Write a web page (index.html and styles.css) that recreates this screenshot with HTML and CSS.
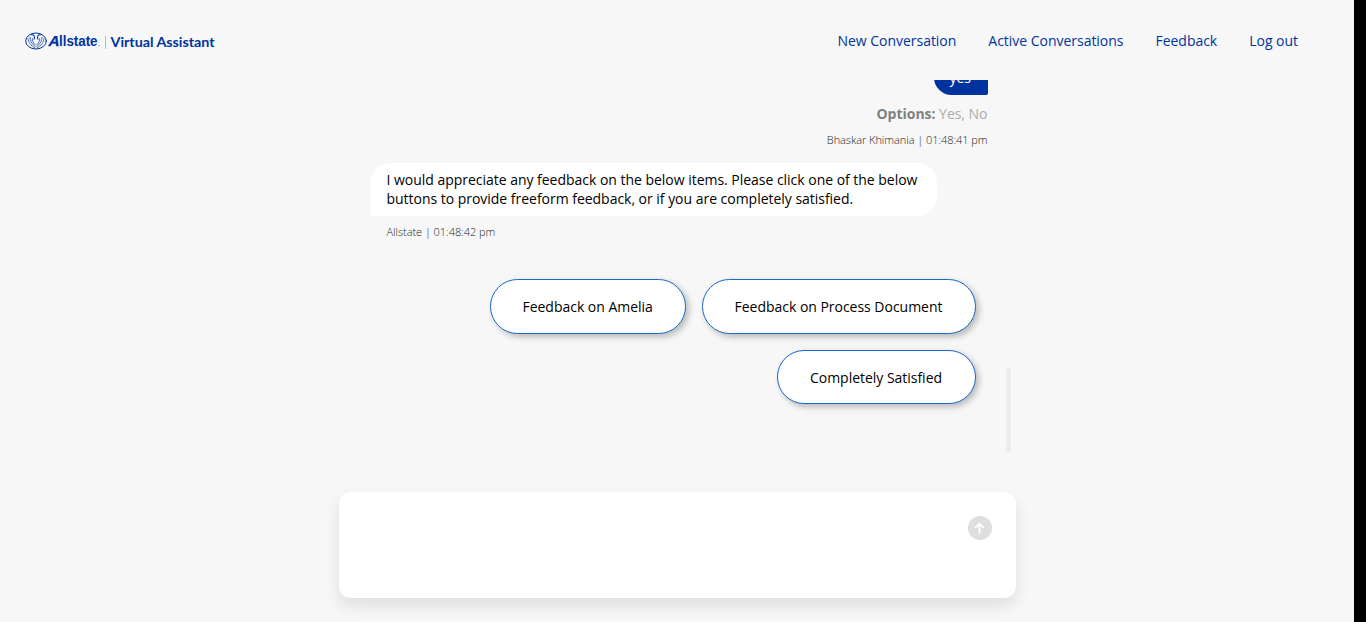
FILE: index.html
```html
<!DOCTYPE html>
<html lang="en">
<head>
<meta charset="utf-8">
<title>Allstate Virtual Assistant</title>
<link rel="stylesheet" href="styles.css">
</head>
<body>
<div class="app">
  <header class="header">
    <svg class="logo" width="194" height="22" viewBox="0 0 194 22" role="img" aria-label="Allstate Virtual Assistant">
      <g fill="none" stroke="#0033a0" stroke-linecap="round">
        <ellipse cx="11" cy="11" rx="10.300" ry="8" stroke-width="1"/>
        <path stroke-width=".7" d="M3 8.500C3.500 12.500 5.500 15.500 9.800 17.800M5 7C5 11 6.800 14 10.200 16.400M7.300 8.500C7.200 11 8.200 12.800 10.300 14.800M19 8.500C18.500 12.500 16.500 15.500 12.200 17.800M17 7C17 11 15.200 14 11.800 16.400M14.700 8.500C14.800 11 13.800 12.800 11.700 14.800"/>
        <path stroke-width="1.100" d="M6.500 4.800C9 4.400 10 6.500 9.200 9.200M15.500 4.800C13 4.400 12 6.500 12.800 9.200"/>
      </g>
      <text class="brand brand-initial" transform="translate(22.800 16.300) skewX(-14)" textLength="11" lengthAdjust="spacingAndGlyphs">A</text>
      <text class="brand" x="34" y="16.300" textLength="38.500" lengthAdjust="spacingAndGlyphs">llstate</text>
      <circle cx="74.300" cy="15.600" r=".7" fill="#7e98cc"/>
      <path d="M80.500 6v13" stroke="#a9bbdf"/>
      <text class="product" x="85.500" y="17" textLength="104" lengthAdjust="spacingAndGlyphs">Virtual Assistant</text>
    </svg>
    <nav class="nav">
      <a class="nav-link">New Conversation</a>
      <a class="nav-link">Active Conversations</a>
      <a class="nav-link">Feedback</a>
      <a class="nav-link">Log out</a>
    </nav>
  </header>
  <main class="chat">
    <section class="history">
      <div class="messages">
        <div class="reply">yes</div>
        <div class="options"><b>Options:</b> Yes, No</div>
        <div class="meta meta-user">Bhaskar Khimania | 01:48:41 pm</div>
        <div class="bubble">I would appreciate any feedback on the below items. Please click one of the below<br>buttons to provide freeform feedback, or if you are completely satisfied.</div>
        <div class="meta meta-bot">Allstate | 01:48:42 pm</div>
        <div class="choices">
          <button class="choice choice-amelia">Feedback on Amelia</button>
          <button class="choice choice-process">Feedback on Process Document</button>
          <button class="choice choice-satisfied">Completely Satisfied</button>
        </div>
      </div>
      <div class="scrollbar"></div>
    </section>
    <section class="composer">
      <button class="send" aria-label="Send">
        <svg width="24" height="24" viewBox="0 0 24 24"><path d="M11.500 17V8M7.700 11.300l3.800-3.700 3.800 3.700" fill="none" stroke="#fff" stroke-width="2" stroke-linecap="round" stroke-linejoin="round"/></svg>
      </button>
    </section>
  </main>
</div>
</body>
</html>
```
FILE: styles.css
```css
* { box-sizing: border-box; }
body {
  margin: 0;
  background: #000;
  font-family: "Open Sans", "Noto Sans", sans-serif;
  font-size: 14px;
  line-height: 19px;
  letter-spacing: -.025px;
  color: #000;
}
.app {
  width: calc(100% - 12px);
  height: 622px;
  overflow: hidden;
  background: #f7f7f7;
}
.header {
  display: flex;
  justify-content: space-between;
  height: 80px;
  padding: 30px 56px 0 25px;
}
.brand {
  font: 700 14.5px "Liberation Sans", sans-serif;
  fill: #0033a0;
}
.brand-initial {
  stroke: #0033a0;
  stroke-width: .3;
}
.product {
  font: 700 12.5px Lato, sans-serif;
  fill: #0033a0;
}
.nav {
  display: flex;
  gap: 32px;
  padding-top: 1px;
}
.nav-link { color: #0033a0; white-space: nowrap; }
.chat {
  width: 50%;
  margin: 0 auto;
}
.history {
  display: flex;
  justify-content: space-between;
  height: 372px;
  overflow: hidden;
}
.messages {
  width: 649px;
  padding-left: 32px;
  display: flex;
  flex-direction: column;
  align-items: flex-start;
}
.reply {
  flex: none;
  align-self: flex-end;
  width: 54px;
  height: 35px;
  margin-top: -20px;
  padding: 8px 0 0 16px;
  border-radius: 20px 20px 2px 20px;
  background: #0033a0;
  color: #fff;
}
.options {
  align-self: flex-end;
  margin-top: 9px;
  color: #aaa;
}
.options b { color: #808080; }
.meta {
  font-size: 11px;
  font-weight: 300;
  line-height: 15px;
  letter-spacing: -.045px;
  color: #222;
}
.meta-user { align-self: flex-end; margin-top: 9px; }
.meta-bot { margin: 8px 0 0 16px; }
.bubble {
  width: 566px;
  height: 53px;
  margin-top: 16px;
  padding: 7px 16px;
  border-radius: 20px 20px 20px 2px;
  background: #fff;
  white-space: nowrap;
}
.choices {
  display: flex;
  flex-wrap: wrap;
  justify-content: flex-end;
  gap: 16px;
  width: 605px;
  margin-top: 40px;
}
.choice {
  height: 55px;
  padding: 0 32px;
  border: 1px solid #1668c9;
  border-radius: 28px;
  background: #fff;
  box-shadow: 3px 3px 6px rgba(0, 0, 0, .25);
  color: #000;
  font: inherit;
  letter-spacing: -.025px;
  white-space: nowrap;
}
.choice-amelia { width: 196px; }
.choice-process { width: 274px; }
.choice-satisfied { width: 199px; height: 54px; }
.scrollbar {
  align-self: flex-end;
  width: 5px;
  height: 84px;
  margin-right: 5px;
  background: #ececec;
}
.composer {
  display: flex;
  justify-content: flex-end;
  height: 106px;
  margin-top: 40px;
  padding: 24px;
  border-radius: 12px;
  background: #fff;
  box-shadow: 0 8px 16px rgba(0, 0, 0, .1);
}
.send {
  width: 24px;
  height: 24px;
  padding: 0;
  border: 0;
  border-radius: 50%;
  background: #dedede;
}
.send svg { display: block; }
```
